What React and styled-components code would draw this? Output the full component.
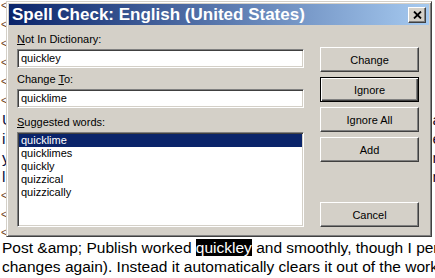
import styled, { createGlobalStyle } from "styled-components";

const GlobalStyle = createGlobalStyle`
  html, body {
    margin: 0;
    padding: 0;
    background: #fff;
    overflow: hidden;
  }
`;

// only the edges of the document show around the dialog
const backLines = [
  { left: "<" },
  { left: "<" },
  { left: "<" },
  { left: "<" },
  { left: "<" },
  { left: "<" },
  { left: "U", right: "a" },
  { left: "i", right: "e" },
  { left: "y", right: "n" },
  { left: "l", right: "n" },
  { left: "<" },
  { left: "<" },
  { left: "<" },
];

export default function App() {
  return (
    <Page>
      <GlobalStyle />
      <Doc>
        <BackLines>
          {backLines.map((line, i) => (
            <EdgeLine key={i}>
              <EdgeLeft $tag={line.left === "<"}>{line.left}</EdgeLeft>
              {line.right && <EdgeRight>{line.right}</EdgeRight>}
            </EdgeLine>
          ))}
        </BackLines>
        <Para>
          <DocLine>
            {"Post &amp; Publish worked "}
            <Marked>quickley</Marked>
            {" and smoothly, though I personally would"}
          </DocLine>
          <DocLine>changes again). Instead it automatically clears it out of the workspace</DocLine>
        </Para>
      </Doc>

      <Dialog>
        <TitleBar>
          <Title>Spell Check: English (United States)</Title>
          <CloseButton>
            <svg width="9" height="8" viewBox="0 0 9 8">
              <path d="M1 0.5 L8 7.5 M8 0.5 L1 7.5" stroke="#000" strokeWidth="1.8" fill="none" />
            </svg>
          </CloseButton>
        </TitleBar>
        <Body>
          <LeftCol>
            <Label>
              <u>N</u>ot In Dictionary:
            </Label>
            <Field>quickley</Field>
            <Label $gap={5}>
              Change <u>T</u>o:
            </Label>
            <Field>quicklime</Field>
            <Label $gap={8}>
              <u>S</u>uggested words:
            </Label>
            <ListBox>
              <ListItem $selected>quicklime</ListItem>
              <ListItem>quicklimes</ListItem>
              <ListItem>quickly</ListItem>
              <ListItem>quizzical</ListItem>
              <ListItem>quizzically</ListItem>
            </ListBox>
          </LeftCol>
          <RightCol>
            <Button>Change</Button>
            <Button $default>Ignore</Button>
            <Button>Ignore All</Button>
            <Button>Add</Button>
            <Button $push>Cancel</Button>
          </RightCol>
        </Body>
      </Dialog>
    </Page>
  );
}

const Page = styled.div`
  position: relative;
  width: 435px;
  height: 278px;
  overflow: hidden;
  background: #fff;
`;

const Doc = styled.div`
  padding-left: 2px;
  font-family: "Liberation Sans", Arial, sans-serif;
  font-size: 15.5px;
  line-height: 19px;
  color: #000;
  white-space: nowrap;
`;

const BackLines = styled.div`
  margin-top: -4px;
`;

const EdgeLine = styled.div`
  height: 19px;
  display: flex;
  align-items: center;
  justify-content: space-between;
  &:last-child {
    height: 14px;
    align-items: flex-start;
  }
`;

const EdgeLeft = styled.span`
  margin-left: ${(p) => (p.$tag ? "-1px" : "0")};
  font-size: ${(p) => (p.$tag ? "10px" : "inherit")};
  line-height: ${(p) => (p.$tag ? "8px" : "19px")};
  color: ${(p) => (p.$tag ? "#6a3a10" : "#0a1040")};
  ${EdgeLine}:last-child & {
    margin-top: 5px;
  }
`;

const EdgeRight = styled.span`
  margin-right: -6px;
  line-height: 19px;
  color: #1a1030;
`;

const DocLine = styled.div`
  height: 19px;
`;

const Para = styled.div``;

const Marked = styled.span`
  background: #000;
  color: #fff;
`;

const Dialog = styled.div`
  position: absolute;
  left: 6px;
  top: 1px;
  width: 426px;
  height: 236px;
  box-sizing: border-box;
  display: flex;
  flex-direction: column;
  padding: 2px;
  background: #d4d0c8;
  border: 1px solid;
  border-color: #d4d0c8 #404040 #404040 #d4d0c8;
  box-shadow: inset 1px 1px #fff, inset -1px -1px #808080;
`;

const TitleBar = styled.div`
  height: 21px;
  display: flex;
  align-items: center;
  padding-left: 3px;
  background: linear-gradient(to right, #0a246a, #a6caf0);
`;

const Title = styled.span`
  font-family: "Liberation Sans", Arial, sans-serif;
  font-weight: bold;
  font-size: 17px;
  color: #fff;
  white-space: nowrap;
`;

const CloseButton = styled.div`
  margin-left: auto;
  margin-right: 3px;
  width: 18px;
  height: 16px;
  box-sizing: border-box;
  display: flex;
  align-items: center;
  justify-content: center;
  background: #d4d0c8;
  border: 1px solid;
  border-color: #fff #404040 #404040 #fff;
  box-shadow: inset -1px -1px #808080;
`;

const Body = styled.div`
  flex: 1;
  display: flex;
  gap: 16px;
  padding: 0 10px 7px 8px;
  font-family: "Liberation Sans", Arial, sans-serif;
  font-size: 11px;
  color: #000;
`;

const LeftCol = styled.div`
  width: 287px;
  display: flex;
  flex-direction: column;
  padding-top: 8px;
`;

const Label = styled.div`
  height: 13px;
  line-height: 13px;
  margin-top: ${(p) => p.$gap || 0}px;
  margin-bottom: 3px;
  white-space: nowrap;
`;

const sunken = `
  box-sizing: border-box;
  background: #fff;
  border: 1px solid;
  border-color: #808080 #fff #fff #808080;
  box-shadow: inset 1px 1px #404040, inset -1px -1px #d4d0c8;
`;

const Field = styled.div`
  ${sunken}
  height: 19px;
  line-height: 17px;
  padding: 0 3px;
`;

const ListBox = styled.div`
  ${sunken}
  flex: 1;
  padding: 1px;
`;

const ListItem = styled.div`
  height: 13px;
  line-height: 13px;
  padding-left: 2px;
  background: ${(p) => (p.$selected ? "#0a246a" : "transparent")};
  color: ${(p) => (p.$selected ? "#fff" : "#000")};
`;

const RightCol = styled.div`
  width: 99px;
  display: flex;
  flex-direction: column;
  gap: 5px;
  padding-top: 22px;
`;

const Button = styled.div`
  height: 25px;
  box-sizing: border-box;
  display: flex;
  align-items: center;
  justify-content: center;
  margin-top: ${(p) => (p.$push ? "auto" : "0")};
  background: #d4d0c8;
  border: 1px solid;
  border-color: ${(p) => (p.$default ? "#000" : "#fff #404040 #404040 #fff")};
  box-shadow: ${(p) =>
    p.$default
      ? "inset 1px 1px #fff, inset -1px -1px #404040, inset -2px -2px #808080"
      : "inset -1px -1px #808080"};
`;
